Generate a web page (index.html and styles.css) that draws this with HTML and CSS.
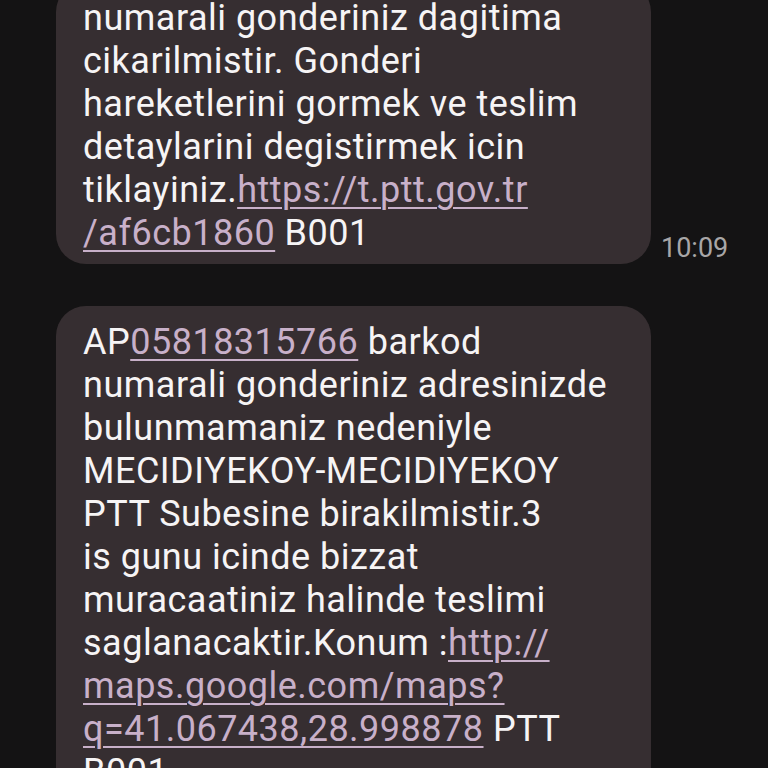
FILE: index.html
```html
<!DOCTYPE html>
<html lang="tr">
<head>
  <meta charset="UTF-8">
  <meta name="viewport" content="width=device-width, initial-scale=1.0">
  <title>Mesajlar</title>
  <link rel="stylesheet" href="styles.css">
</head>
<body>
  <div class="thread">
    <div class="row">
      <div class="bubble">
        numarali gonderiniz dagitima cikarilmistir. Gonderi hareketlerini gormek ve teslim detaylarini degistirmek icin tiklayiniz.<a href="#">https://t.ptt.gov.tr<wbr>/af6cb1860</a> B001
      </div>
      <span class="time">10:09</span>
    </div>

    <div class="row">
      <div class="bubble">
        AP<a href="#">05818315766</a> barkod numarali gonderiniz adresinizde bulunmamaniz nedeniyle MECIDIYEKOY-MECIDIYEKOY PTT Subesine birakilmistir.3<br>is gunu icinde bizzat muracaatiniz halinde teslimi saglanacaktir.Konum :<a href="#">http://<wbr>maps.google.com/maps?<wbr>q=41.067438,28.998878</a> PTT B001
      </div>
    </div>
  </div>
</body>
</html>
```

FILE: styles.css
```css
html, body {
  margin: 0;
  height: 100%;
  overflow: hidden;
}
body {
  background-color: #141314;
  font-family: Roboto, "Noto Sans", sans-serif;
  color: #f6f4f5;
}
.thread {
  display: flex;
  flex-direction: column;
  gap: 42px;
  margin-top: -18px; /* first bubble is scrolled partly out of view */
  padding-left: 56px;
}
.row {
  display: flex;
  align-items: flex-end;
  gap: 10px;
}
.bubble {
  width: 541px;
  padding: 15px 27px 9px 27px;
  background-color: #362e31;
  border-radius: 30px;
  font-size: 36px;
  letter-spacing: 0.5px;
  line-height: 43px;
}
.bubble a {
  color: #c8b0c9;
  text-decoration: underline;
  text-decoration-thickness: 2px;
  text-underline-offset: 5px;
}
.time {
  font-size: 27px;
  color: #a8a6a7;
  margin-bottom: 0;
}
```
